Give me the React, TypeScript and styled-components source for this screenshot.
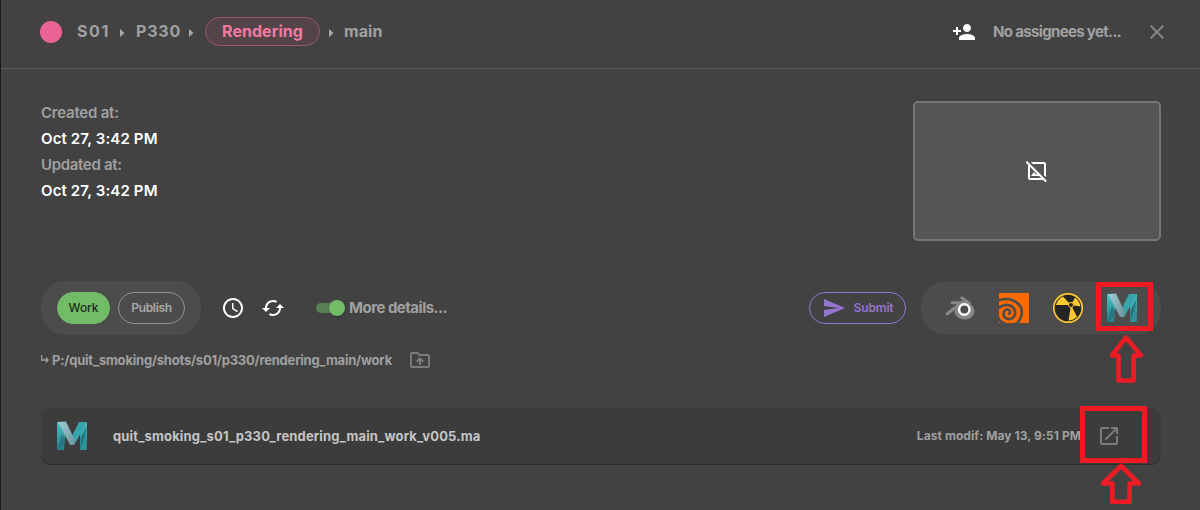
import React from "react";
import styled, { createGlobalStyle } from "styled-components";
import {
  MdCached,
  MdClose,
  MdOpenInNew,
  MdOutlineDriveFolderUpload,
  MdOutlineImageNotSupported,
  MdPersonAdd,
  MdSchedule,
  MdSend,
} from "react-icons/md";

const GlobalStyle = createGlobalStyle`
  *, *::before, *::after { box-sizing: border-box; }
  body {
    margin: 0;
    background: #424242;
    font-family: Inter, "Liberation Sans", sans-serif;
    overflow: hidden;
  }
`;

const Page = styled.div`
  position: relative;
  height: 510px;
  border-left: 1px solid #191919;
  background: #424242;
  color: #a0a0a0;
  font-weight: 600;
`;

const Header = styled.header`
  display: flex;
  align-items: center;
  height: 69px;
  padding: 0 31px 5px 39px;
  border-bottom: 1px solid #5f5f5f;
`;

const Text = styled.span<{ $size: number; $track?: number; $color?: string; $width?: number; $weight?: number; $indent?: number }>`
  flex: none;
  width: ${(p) => (p.$width ? `${p.$width}px` : "auto")};
  margin-left: ${(p) => p.$indent ?? 0}px;
  font-size: ${(p) => p.$size}px;
  font-weight: ${(p) => p.$weight ?? 600};
  letter-spacing: ${(p) => p.$track ?? 0}px;
  color: ${(p) => p.$color ?? "#a0a0a0"};
  line-height: 26px;
  white-space: pre;
`;

const Crumb = styled(Text)`
  margin-top: -2px;
`;

const Status = styled.span`
  width: 22px;
  height: 22px;
  margin-right: 15px;
  border-radius: 50%;
  background: #eb6394;
`;

const Arrow = styled.svg`
  flex: none;
  width: 5px;
  height: 8px;
  margin: 3px 11px 0 9px;
  fill: #a8a8a8;
`;

const TaskChip = styled.span`
  display: flex;
  align-items: center;
  justify-content: center;
  width: 115px;
  height: 29px;
  border: 1px solid #9d5670;
  border-radius: 15px;
  background: #544448;
`;

const Assignees = styled.div`
  display: flex;
  align-items: center;
  margin-left: auto;
`;

const Info = styled.section`
  display: flex;
  justify-content: space-between;
  height: 212px;
  padding: 32px 39px 0 40px;
`;

const Dates = styled.div`
  display: flex;
  flex-direction: column;
  margin-top: -1px;
`;

const Thumbnail = styled.div`
  display: flex;
  align-items: center;
  justify-content: center;
  width: 248px;
  height: 140px;
  border: 2px solid #757575;
  border-radius: 5px;
  background: #555;
  color: #fff;
`;

const Toolbar = styled.section`
  display: flex;
  align-items: center;
  height: 53px;
  padding: 0 39px 0 40px;
`;

const ModeGroup = styled.div`
  display: flex;
  align-items: center;
  gap: 8px;
  width: 160px;
  height: 54px;
  padding: 0 16px;
  border-radius: 24px;
  background: #4c4c4c;
`;

const Pill = styled.button<{ $width: number; $tone: string; $fill?: string }>`
  display: flex;
  align-items: center;
  justify-content: center;
  flex: none;
  width: ${(p) => p.$width}px;
  height: 32px;
  padding: 0;
  border: 1px solid ${(p) => p.$tone};
  border-radius: 16px;
  background: ${(p) => p.$fill ?? "transparent"};
  color: ${(p) => p.$tone};
  font-family: inherit;
`;

const ToolIcons = styled.div`
  display: flex;
  gap: 16px;
  margin: 0 31px 0 20px;
  color: #fff;
`;

const Switch = styled.span`
  display: flex;
  align-items: center;
  justify-content: flex-end;
  width: 26px;
  height: 10px;
  margin-right: 7px;
  border-radius: 5px;
  background: #598055;
`;

const Thumb = styled.span`
  flex: none;
  width: 16px;
  height: 16px;
  margin-right: -3px;
  border-radius: 50%;
  background: #71bd66;
  box-shadow: 0 1px 2px rgba(0, 0, 0, 0.3);
`;

const Actions = styled.div`
  display: flex;
  align-items: center;
  gap: 15px;
  margin-left: auto;
`;

const Apps = styled.div`
  display: flex;
  align-items: center;
  justify-content: space-between;
  width: 240px;
  height: 52px;
  padding: 0 24px;
  border-radius: 23px;
  background: #4c4c4c;
`;

const PathRow = styled.section`
  display: flex;
  align-items: center;
  height: 26px;
  margin-top: 13px;
  padding-left: 40px;
`;

const Hook = styled.svg`
  width: 8px;
  height: 9px;
  margin: 0 3px 2px 0;
  fill: none;
  stroke: #a0a0a0;
  stroke-width: 1.3;
`;

const FileRow = styled.section`
  display: flex;
  align-items: center;
  height: 57px;
  margin: 35px 39px 0 40px;
  padding: 0 40px 0 16px;
  border-radius: 10px;
  border-bottom: 1px solid #2b2b2b;
  background: #3c3c3c;
`;

const Modified = styled.div`
  display: flex;
  align-items: center;
  gap: 16px;
  margin-left: auto;
  color: #7b7b7b;
`;

const Highlight = styled.div<{ $x: number; $y: number; $w: number; $h: number }>`
  position: absolute;
  left: ${(p) => p.$x - 1}px;
  top: ${(p) => p.$y}px;
  width: ${(p) => p.$w}px;
  height: ${(p) => p.$h}px;
  border: 5px solid #ed1c24;
`;

const Pointer = styled.svg<{ $x: number; $y: number }>`
  position: absolute;
  left: ${(p) => p.$x - 1}px;
  top: ${(p) => p.$y}px;
  fill: none;
  stroke: #ed1c24;
  stroke-width: 4.6;
  stroke-linejoin: round;
`;

const Separator = () => (
  <Arrow viewBox="0 0 5 8">
    <path d="M0 0 4.5 4 0 8Z" />
  </Arrow>
);

const BlenderLogo = () => (
  <svg width="30" height="30" viewBox="0 0 30 30">
    <g fill="none" stroke="#878787" strokeWidth="3" strokeLinecap="round">
      <path d="m16.7 4.8 8 6M7 9.7h12M2.2 20.8l11-8.6" />
    </g>
    <path d="M14 9h8c4 2 7.500 5 7.500 9.200 0 4.800-4.500 8.300-10.200 8.300S9.500 22.500 9.500 17.500Z" fill="#878787" />
    <circle cx="19.300" cy="16.500" r="5.200" fill="#4c4c4c" stroke="#fff" strokeWidth="2.500" />
  </svg>
);

const HoudiniLogo = () => (
  <svg width="30" height="30" viewBox="0 0 30 30">
    <path d="M0 0h30v30H0Z" fill="#ff6a00" />
    <g fill="none" stroke="#4c4c4c" strokeWidth="2.600">
      <path d="M-1 7.700C4 5.700 9 5.500 13 7 19 9.500 23.200 14 22.800 20 22.500 25 20.500 28 17 31" />
      <path d="M-1 15.500C3 12 8 11 12 13c5 2.500 5.500 9 1.500 12-3.500 2.500-9 .500-9-4.500 0-3.500 3.500-5 5.500-3.500s1.500 4-1 4" />
      <path d="M-1 24c1 3 4 6 8 7" />
    </g>
  </svg>
);

const NukeLogo = () => (
  <svg width="30" height="30" viewBox="0 0 30 30">
    <circle cx="15" cy="15" r="14.200" fill="#242424" stroke="#fcc72f" strokeWidth="1.700" />
    <path d="M18 12 3 12A12.500 12.500 0 0 1 10 3.500ZM18 12 22 4.500A12.500 12.500 0 0 1 27.400 13.500ZM18 12 24 23.700A12.500 12.500 0 0 1 15.500 27.500Z" fill="#fcc72f" />
    <circle cx="18" cy="12" r="2.500" fill="#242424" stroke="#fcc72f" />
  </svg>
);

const MayaLogo = ({ id }: { id: string }) => (
  <svg width="30" height="30" viewBox="0 0 30 30">
    <defs>
      <linearGradient id={`${id}-fold`} x1="0" y1="0" x2="1" y2="1">
        <stop stopColor="#a3ccd6" />
        <stop offset="1" stopColor="#69929b" />
      </linearGradient>
      <linearGradient id={`${id}-side`} x1="0" y1="0" x2="0" y2="1">
        <stop stopColor="#45bfc4" />
        <stop offset="1" stopColor="#267d88" />
      </linearGradient>
    </defs>
    <path d="M0 1h8v18l-1 10H0ZM22 1h8v28h-7V12Z" fill={`url(#${id}-side)`} />
    <path d="M0 29 5 13l3 6-1 5Z" fill="#2b7482" />
    <path d="M22 1 14 17l3 7 8-14 5-9Z" fill="#36a5ab" />
    <path d="m23 29 6-19v19Z" fill="#2f929a" />
    <path d="m24 17 6-12-6 22Z" fill="#257078" />
    <path d="M1 1 9 .500l9 19-1 4.500h-4Z" fill={`url(#${id}-fold)`} />
  </svg>
);

export default function App() {
  return (
    <Page>
      <GlobalStyle />
      <Header>
        <Status />
        <Crumb $size={16} $width={34} $weight={700} $track={1.6}>S01</Crumb>
        <Separator />
        <Crumb $size={16} $width={44} $weight={700} $track={0.8}>P330</Crumb>
        <Separator />
        <TaskChip>
          <Crumb $size={16} $weight={700} $track={0.05} $color="#f07ba4">Rendering</Crumb>
        </TaskChip>
        <Separator />
        <Crumb $size={16} $weight={700} $track={0.1} $indent={-1}>main</Crumb>
        <Assignees>
          <MdPersonAdd size={24} color="#fff" />
          <Text $size={15} $weight={700} $width={152} $track={-0.66} $indent={17}>No assignees yet...</Text>
          <MdClose size={24} color="#858585" />
        </Assignees>
      </Header>
      <Info>
        <Dates>
          <Text $size={15} $track={-0.22}>Created at:</Text>
          <Text $size={15} $track={0.13} $color="#fff">Oct 27, 3:42 PM</Text>
          <Text $size={15} $track={-0.33}>Updated at:</Text>
          <Text $size={15} $track={0.13} $color="#fff">Oct 27, 3:42 PM</Text>
        </Dates>
        <Thumbnail>
          <MdOutlineImageNotSupported size={24} />
        </Thumbnail>
      </Info>
      <Toolbar>
        <ModeGroup>
          <Pill $width={53} $tone="#71bd66" $fill="#71bd66">
            <Text $size={12} $weight={500} $track={-0.1} $color="#1d2b1b">Work</Text>
          </Pill>
          <Pill $width={67} $tone="#929292">
            <Text $size={12} $track={-0.35} $color="#a8a8a8">Publish</Text>
          </Pill>
        </ModeGroup>
        <ToolIcons>
          <MdSchedule size={24} />
          <MdCached size={24} />
        </ToolIcons>
        <Switch>
          <Thumb />
        </Switch>
        <Text $size={15} $weight={700} $track={-0.5}>More details...</Text>
        <Actions>
          <Pill $width={97} $tone="#9575cd">
            <MdSend size={24} />
            <Text $size={12} $track={-0.15} $indent={8} $color="#9575cd">Submit</Text>
          </Pill>
          <Apps>
            <BlenderLogo />
            <HoudiniLogo />
            <NukeLogo />
            <MayaLogo id="app" />
          </Apps>
        </Actions>
      </Toolbar>
      <PathRow>
        <Hook viewBox="0 0 8 9">
          <path d="M.700 0v5H7M4.700 2.500 7.200 5 4.700 7.500" />
        </Hook>
        <Text $size={13} $weight={700} $track={-0.21} $width={356}>P:/quit_smoking/shots/s01/p330/rendering_main/work</Text>
        <MdOutlineDriveFolderUpload size={24} color="#7b7b7b" />
      </PathRow>
      <FileRow>
        <MayaLogo id="file" />
        <Text $size={13} $weight={700} $track={0.16} $color="#c5c5c5" $indent={26}>quit_smoking_s01_p330_rendering_main_work_v005.ma</Text>
        <Modified>
          <Text $size={12} $weight={700} $track={0.08}>Last modif: May 13, 9:51 PM</Text>
          <MdOpenInNew size={24} />
        </Modified>
      </FileRow>
      <Highlight $x={1096} $y={282} $w={57} $h={49} />
      <Pointer $x={1108} $y={333} width="36" height="52" viewBox="0 0 36 52">
        <path d="M18 4.500 4 22.500h6.500V47.500h15.200V22.500H33Z" />
      </Pointer>
      <Highlight $x={1080} $y={406} $w={67} $h={57} />
      <Pointer $x={1099} $y={461} width="44" height="46" viewBox="0 0 44 46">
        <path d="M22 5 4 22.500h9.300V40.700h17.400V22.500H40Z" />
      </Pointer>
    </Page>
  );
}
